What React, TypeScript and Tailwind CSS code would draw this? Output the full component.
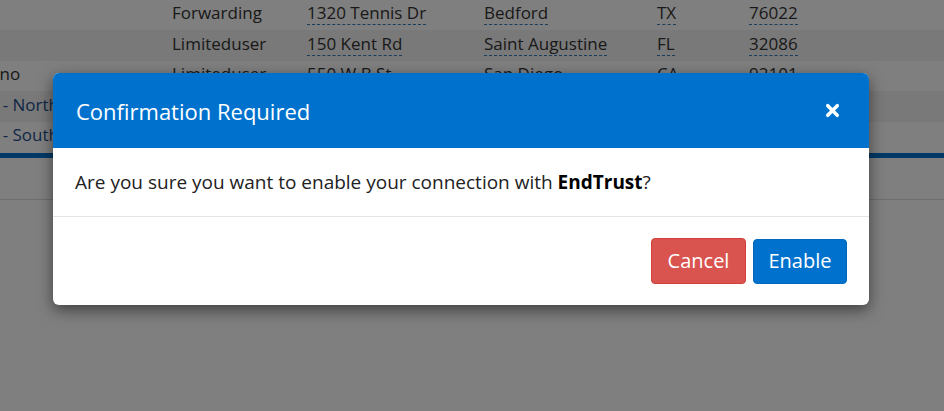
import { X } from 'lucide-react'

const rows = [
  { lead: '', role: 'Forwarding', street: '1320 Tennis Dr', city: 'Bedford', state: 'TX', zip: '76022' },
  { lead: '', role: 'Limiteduser', street: '150 Kent Rd', city: 'Saint Augustine', state: 'FL', zip: '32086' },
  { lead: 'San Bernardino', role: 'Limiteduser', street: '550 W B St', city: 'San Diego', state: 'CA', zip: '92101' },
  { lead: 'Region - North', role: '', street: '', city: '', state: '', zip: '', link: true },
  { lead: 'Region - South', role: '', street: '', city: '', state: '', zip: '', link: true },
]

function Dotted({ children }: { children: string }) {
  if (!children) return null
  return <span className="border-b border-dashed border-[#337ab7] leading-[20px]">{children}</span>
}

export default function App() {
  return (
    <div className="relative w-[944px] h-[411px] overflow-hidden bg-white text-[17px] text-[#333]" style={{ fontFamily: '"Open Sans", sans-serif' }}>
      {/* table behind the overlay */}
      <div className="flex flex-col">
        {rows.map((r, i) => (
          <div key={i} className={`flex items-center h-[30.4px] pb-[4px] ${i % 2 === 1 ? 'bg-[#f2f2f2]' : 'bg-white'}`}>
            <div className="w-[172px] overflow-hidden whitespace-nowrap">
              <span className={`block ${r.link ? 'ml-[-56px] text-[#1f4e8c]' : 'ml-[-103px] text-[#333]'}`}>{r.lead}</span>
            </div>
            <div className="w-[135px] text-[#333]">{r.role}</div>
            <div className="w-[177px]"><Dotted>{r.street}</Dotted></div>
            <div className="w-[173px]"><Dotted>{r.city}</Dotted></div>
            <div className="w-[92px]"><Dotted>{r.state}</Dotted></div>
            <div><Dotted>{r.zip}</Dotted></div>
          </div>
        ))}
        <div className="h-[5px] mt-[1px] bg-[#0072ce]" />
        <div className="h-[42px] border-b border-[#ddd]" />
      </div>

      {/* overlay */}
      <div className="absolute inset-0 bg-black/50" />

      {/* modal */}
      <div className="absolute left-[53px] top-[73px] w-[816px] rounded-[6px] overflow-hidden bg-white shadow-[0_5px_15px_rgba(0,0,0,0.5)]">
        <div className="h-[75px] bg-[#0072ce] flex items-center justify-between pl-[23px] pr-[27px]">
          <h2 className="text-[22px] text-white leading-none">Confirmation Required</h2>
          <button className="text-white">
            <X size={19} strokeWidth={4.5} />
          </button>
        </div>
        <div className="h-[69px] border-b border-[#e5e5e5] flex items-center px-[22px]">
          <p className="text-[19px] text-[#222]">
            Are you sure you want to enable your connection with <b className="font-bold text-black">EndTrust</b>?
          </p>
        </div>
        <div className="h-[88px] flex items-center justify-end gap-[7px] pr-[22px]">
          <button className="h-[46px] w-[95px] rounded-[4px] bg-[#d9534f] border border-[#d43f3a] text-white text-[20px]">Cancel</button>
          <button className="h-[45px] w-[94px] rounded-[4px] bg-[#0072ce] border border-[#0069bd] text-white text-[20px]">Enable</button>
        </div>
      </div>
    </div>
  )
}
